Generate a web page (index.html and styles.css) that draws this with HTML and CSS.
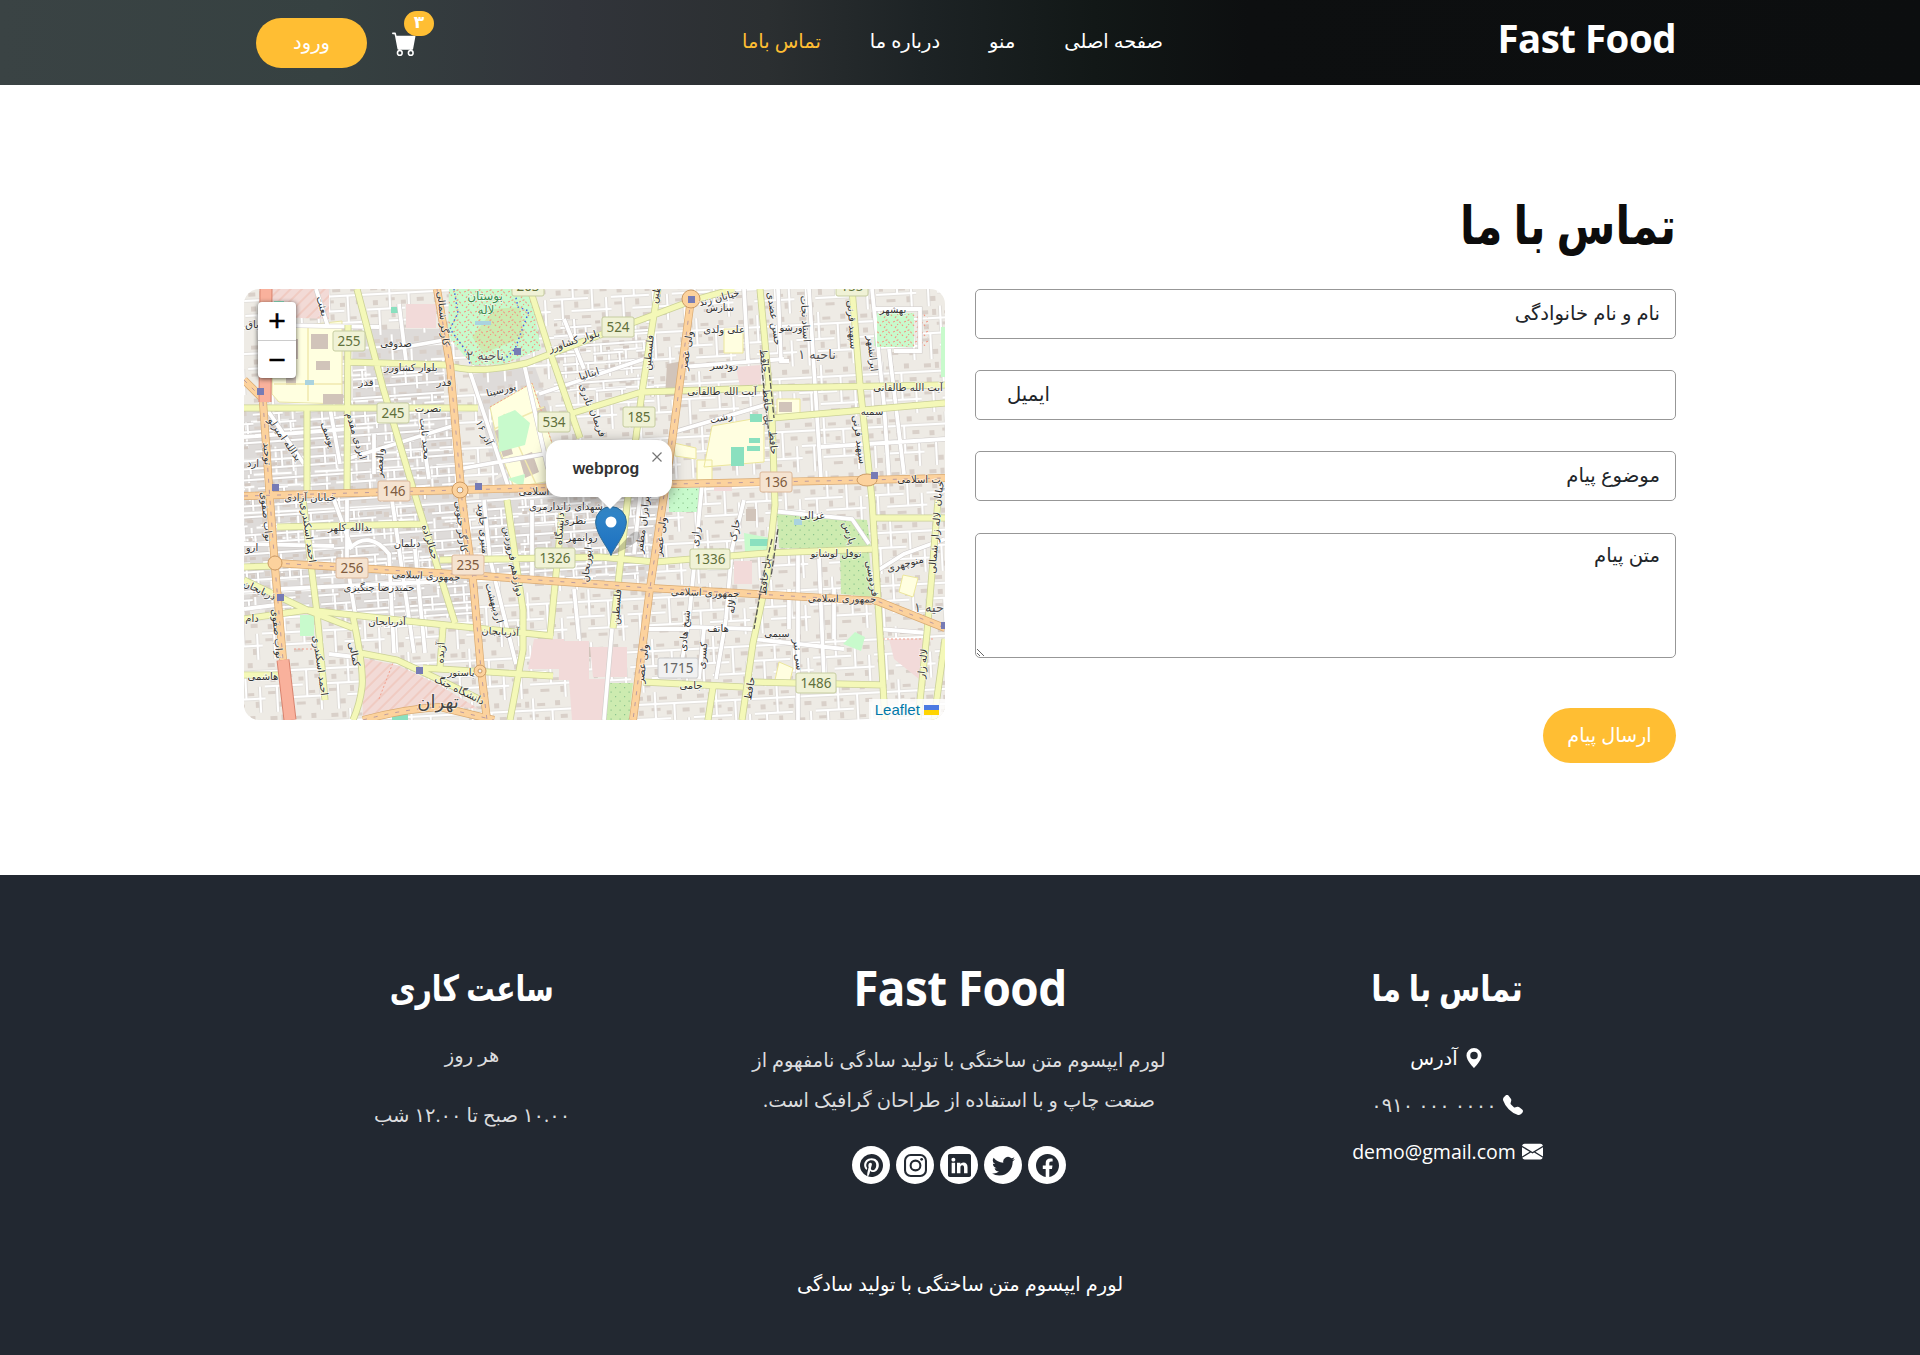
FILE: index.html
```html
<!DOCTYPE html>
<html lang="fa" dir="rtl">
<head>
<meta charset="utf-8">
<title>Fast Food</title>
<link rel="stylesheet" href="styles.css">
</head>
<body>
<header class="header">
  <div class="container header-row">
    <a class="brand">Fast Food</a>
    <nav class="nav">
      <a>صفحه اصلی</a><a>منو</a><a>درباره ما</a><a class="active">تماس باما</a>
    </nav>
    <div class="actions">
      <a class="cart">
        <svg width="25" height="25" viewBox="0 0 16 16" fill="currentColor"><path d="M0 1.5A.5.5 0 0 1 .5 1H2a.5.5 0 0 1 .485.379L2.89 3H14.5a.5.5 0 0 1 .491.592l-1.5 8A.5.5 0 0 1 13 12H4a.5.5 0 0 1-.491-.408L2.01 3.607 1.61 2H.5a.5.5 0 0 1-.5-.5zM5 12a2 2 0 1 0 0 4 2 2 0 0 0 0-4zm7 0a2 2 0 1 0 0 4 2 2 0 0 0 0-4zm-7 1a1 1 0 1 1 0 2 1 1 0 0 1 0-2zm7 0a1 1 0 1 1 0 2 1 1 0 0 1 0-2z"/></svg>
        <span class="badge">۳</span>
      </a>
      <a class="login">ورود</a>
    </div>
  </div>
</header>

<main class="container contact">
  <h1 class="title">تماس با ما</h1>
  <div class="columns">
    <form class="form">
      <input class="field" type="text" placeholder="نام و نام خانوادگی">
      <input class="field email" type="email" dir="ltr" placeholder="ایمیل">
      <input class="field" type="text" placeholder="موضوع پیام">
      <textarea class="field message" placeholder="متن پیام"></textarea>
      <button class="send" type="button">ارسال پیام</button>
    </form>
    <div class="map" dir="ltr">
      <svg class="tiles" width="701" height="431" viewBox="0 0 701 431">
        <defs>
          <pattern id="blocks" width="61" height="53" patternUnits="userSpaceOnUse" patternTransform="rotate(-3)">
            <g fill="#d9d0c9"><path d="M4 4h7v4H4zM15 3h4v6h-4zM27 5h8v3h-8zM45 3h5v5h-5zM6 18h5v5H6zM19 16h9v3h-9zM34 19h5v4h-5zM50 17h7v4h-7zM3 32h8v3H3zM24 30h4v6h-4zM41 33h9v3h-9zM13 43h6v5h-6zM31 44h9v3h-9zM51 42h5v6h-5z"/></g>
            <g stroke="#d3cfcb" stroke-width="3.4" fill="none"><path d="M0 12h61M0 27h38M21 39h40M23 0v27M42 12v27M12 27v26M56 27v26"/></g>
            <g stroke="#fff" stroke-width="2.3" fill="none"><path d="M0 12h61M0 27h38M21 39h40M23 0v27M42 12v27M12 27v26M56 27v26"/></g>
          </pattern>
          <pattern id="dense" width="43" height="37" patternUnits="userSpaceOnUse" patternTransform="rotate(-4)">
            <g stroke="#c9c5c3" stroke-width="3" fill="none"><path d="M0 6h43M0 15h30M12 24h31M0 32h43M8 6v9M26 15v17M37 24v13"/></g>
            <g stroke="#fff" stroke-width="2" fill="none"><path d="M0 6h43M0 15h30M12 24h31M0 32h43M8 6v9M26 15v17M37 24v13"/></g>
            <g fill="#d2c8c1"><path d="M13 9h4v3h-4zM30 9h6v3h-6zM4 19h5v3H4zM30 27h4v3h-4zM16 27h5v3h-5z"/></g>
          </pattern>
          <pattern id="trees" width="9" height="9" patternUnits="userSpaceOnUse"><path fill="#8cc48d" d="M2 2h1.2v1.2H2zM6.500 6.500h1.200v1.200H6.500z"/></pattern>
          <pattern id="paths" width="11" height="10" patternUnits="userSpaceOnUse"><path d="M0 3l5-2 5 6M2 9l3-4" stroke="#f5927f" stroke-width="1.100" stroke-dasharray="2 1.800" fill="none"/></pattern>
          <pattern id="hatch" width="8" height="8" patternUnits="userSpaceOnUse" patternTransform="rotate(45)"><path fill="none" stroke="#eebcae" stroke-width="1" d="M1 0v8"/></pattern>
          <path id="boulevards" d="M104 73L203 76Q230 86 283 74L356 46L447 12L490 0M0 119H234M104 36L103 203M63 119V205M113 0L139 99L174 216L211 334M286 0L306 63L336 149M329 124L398 103L523 99L701 96M414 0L398 103L383 216L369 339M516 0L528 129L531 216L523 288L509 354L498 431M528 129L701 114M608 0L616 96L628 211L634 312L641 431M694 211L683 344L674 431M628 229H701M196 271L356 268L411 273L523 264L628 260M33 238L179 235M59 211L73 324L81 411M0 291L63 321L109 339M0 330L63 321L163 332L309 347M109 328Q120 380 118 398Q116 415 109 431M116 364L153 371L196 391L241 413M179 379L309 387M263 211L279 321V361L266 431M318 224L306 347M199 338L196 378M399 393L499 398M509 393L641 396M469 398L464 431M0 278L29 277M0 386L39 386M690 431L701 350"/>
          <path id="avenues" d="M0 91L17 108M0 207L216 201L429 195L623 191L701 189M193 0L206 76L218 211L229 291L237 381L243 431M31 274L209 285L406 299L633 312L701 339M447 10L428 153L406 299L389 431M19 113L26 211L31 278L39 371M119 431Q160 420 196 418L250 431"/>
          <path id="streets" d="M30 36L135 38M150 60L206 50M72 0L84 38M225 80L265 200M155 15L163 80M280 75L304 180M320 30L340 80M295 105L400 70M0 148L103 140M103 170L215 135M215 180L300 165M86 119L96 175M130 145V185M176 130L185 190M22 119L60 175M438 78L540 70M500 0L504 73M534 0L537 72L545 72M565 0L571 96L577 190M628 0L640 115L645 190M650 62H676V20H630M430 143L524 115M577 158L701 150M645 60L660 185M0 255L90 257M90 211L108 260M103 211V270L107 300L112 330M105 260Q125 240 145 265L150 364M148 211L170 364M170 250L181 364M240 211L246 270L272 375M288 211V288M35 300L208 292M400 170L390 265M458 196L445 330L435 390M500 211L488 260L482 330L472 390M554 265V431M528 222L608 230L625 255M628 285L660 265L701 250M445 338L509 340M509 350L600 360M575 270L580 390M590 300V350M460 340L455 390M400 340H445M545 300V340M635 340L683 344M368 340L360 431M330 300L335 350M0 320L32 316M85 365L111 368"/>
        </defs>
        <rect width="701" height="431" fill="#eeebe5"/>
        <path fill="#dedbd9" d="M0 119H210L229 330L0 320zM109 40H200V119H109zM230 85L290 75L310 130L250 190zM290 170H430L410 290H235V200z"/>
        <rect width="701" height="431" fill="url(#blocks)"/>
        <path fill="url(#dense)" d="M0 119H210L229 330L0 320zM109 80H200V119H109zM310 30H410V110L310 100zM220 205H415L400 290H230z"/>
        <path fill="#ffffe0" stroke="#e9e5a4" d="M29 40L98 32V115L35 113L28 105zM246 118L288 94L320 190L270 198L255 160z"/>
        <path fill="#fffee0" stroke="#ece69b" d="M480 40h19v24h-19zM430 154l22 5v11l-21-3zM468 137l52-9v45l-60 5zM533 110h23v17h-23zM453 171h15v20h-15zM659 286l15 3-5 19-14-5zM535 373l14 6-4 17-14-5z"/>
        <g fill="#d1c4ba"><path d="M67 45h17v15H67zM40 50h14v20H40zM79 105h20v10H79zM42 84h10v12H42zM72 72h14v9H72zM275 168l13-5 7 20-14 6zM251 142l10-5 8 28-10 3zM292 120l9-3 4 12-9 3zM423 75l16-3-3 34-15 2zM283 42h12v20h-12zM535 113h13v10h-13zM502 220h10v12h-10zM344 358h6v10h-6zM134 395l8-6 3 8-8 6zM160 385l10 3-3 8-9-3zM175 400l9 2-2 8-9-3z"/></g>
        <path fill="none" stroke="#f1e9ae" stroke-width="1.500" d="M64 34V112M30 95H98M260 125L292 195M250 140L300 118"/>
        <path fill="#f2dad9" d="M162 15h30v24h-30zM492 78l25-2v24l-20 3zM290 350h30v30h-36zM315 352h30v79h-17l-3-40h-10zM346 358h37v30h-34zM341 390h20v41h-20zM490 272h18v23h-18zM645 350h35l-5 40-25-20zM470 190h18v12h-18z"/>
        <path fill="#f2dad6" d="M20 0H85V30L30 28zM117 369L153 376L195 396L235 420L196 416L119 429z"/>
        <path fill="url(#hatch)" d="M20 0H85V30L30 28zM117 369L153 376L195 396L235 420L196 416L119 429z"/>
        <path fill="#c8facc" d="M205 0H286L297 60L260 75L228 76L204 47zM254 128l17-7 15 13-5 22-26 7zM425 199h30v24h-30zM56 326h14v21H56zM500 244l26 5-3 14h-22zM630 25h39v32h-39zM599 355l12-12 10 5-4 14zM263 190l18-5-2 13zM697 38h4v50h-4z"/>
        <path fill="#cdebb0" d="M250 20L276 18L280 48L240 64L228 48zM533 225L623 231L627 260L535 259zM596 263L625 261L629 308L597 305zM363 394H389L385 431H358z"/>
        <path fill="url(#trees)" d="M533 225L623 231L627 260L535 259zM596 263L625 261L629 308L597 305zM363 394H389L385 431H358zM425 199h30v24h-30z"/>
        <path fill="url(#paths)" d="M205 0H286L297 60L260 75L228 76L204 47zM645 25h39v32h-39z"/>
        <g fill="none" stroke="#f3a08e" stroke-dasharray="2 2"><path d="M246 118L288 94L320 190M50 360h30M135 410L150 371M635 350h55"/></g>
        <path fill="none" stroke="#4764df" stroke-width="1.500" stroke-dasharray="1.500 3" d="M210 0L214 24L206 40L222 62L226 75M270 0L274 18L285 22L271 60L258 73"/>
        <path fill="#8ae0bf" d="M487 158h13v19h-13zM506 125h12v8h-12zM505 149h11v5h-11zM503 157h13v5h-13zM147 18h9v6h-9zM506 250h18v7h-18zM30 12h10v5H30zM148 424h16v7h-16z"/>
        <path fill="#aad3df" d="M61 91h9v5h-9zM231 32h16v4h-16zM550 230h8v6h-8z"/>
        <use href="#streets" fill="none" stroke="#d0ccca" stroke-width="5"/>
        <use href="#streets" fill="none" stroke="#fff" stroke-width="3.800"/>
        <path fill="#c8facc" d="M633 24h37v34h-37z"/>
        <path fill="url(#paths)" d="M633 24h37v34h-37z"/>
        <use href="#boulevards" fill="none" stroke="#cbd197" stroke-width="7"/>
        <use href="#boulevards" fill="none" stroke="#f4f8b8" stroke-width="5.400"/>
        <use href="#avenues" fill="none" stroke="#d9aa72" stroke-width="8"/>
        <use href="#avenues" fill="none" stroke="#fcd29d" stroke-width="6.600"/>
        <use href="#avenues" fill="none" stroke="#a98da1" stroke-width=".8" stroke-dasharray="4 7"/>
        <path fill="none" stroke="#d8836e" stroke-width="13" d="M22 0L21 113M39 371L46 431"/>
        <path fill="none" stroke="#f9b19c" stroke-width="11" d="M22 0L21 113M39 371L46 431"/>
        <path fill="none" stroke="#555" stroke-width="1.300" stroke-dasharray="6 2" d="M517 70L523 129L527 160M524 70L530 129M528 250L519 288L510 340M534 240L527 288"/>
        <g fill="#fcd29d" stroke="#cc9a63"><circle cx="216" cy="201" r="8"/><circle cx="31" cy="274" r="7"/><circle cx="447" cy="10" r="9"/><circle cx="236" cy="382" r="6"/><ellipse cx="623" cy="191" rx="10" ry="6"/></g>
        <g fill="#eee" stroke="#cc9a63"><circle cx="216" cy="201" r="3"/><circle cx="236" cy="382" r="2"/></g>
        <g fill="#767bb5"><path d="M13 99h7v7h-7zM28 195h7v7h-7zM231 194h7v7h-7zM270 59h7v7h-7zM444 7h7v7h-7zM627 183h7v7h-7zM33 305h7v7h-7zM172 378h7v7h-7zM697 333h4v7h-4z"/></g>

        <g class="label">
          <text x="152" y="58">صدوقی</text><text x="167" y="82">بلوار کشاورز</text><text x="122" y="97">قدر</text><text x="200" y="97">قدر</text><text x="184" y="123">نصرت</text>
          <text x="66" y="212">خیابان آزادی</text><text x="290" y="206">اسلامی</text><text x="8" y="39">باق</text><text x="9" y="178">ارد</text>
          <text transform="translate(75 18) rotate(75)">بعثت</text>
          <text transform="translate(196 30) rotate(84)">کارگر شمالی</text>
          <text transform="translate(258 104) rotate(-14)">پورسینا</text>
          <text transform="translate(331 55) rotate(-18)">بلوار کشاورز</text>
          <text transform="translate(346 88) rotate(-18)">ایتالیا</text>
          <text transform="translate(339 107) rotate(72)">نادری</text>
          <text transform="translate(351 135) rotate(70)">فریمان</text>
          <text transform="translate(237 145) rotate(65)">۱۶ آذر</text>
          <text transform="translate(38 152) rotate(55)">یدالله امیرلو</text>
          <text transform="translate(81 147) rotate(70)">یوسف</text>
          <text transform="translate(109 148) rotate(73)">ایزدی مقدم</text>
          <text transform="translate(139 174) rotate(-87)">والعصر</text>
          <text transform="translate(178 150) rotate(84)">مجید ثابت</text>
          <text transform="translate(20 165) rotate(86)">توحید</text>
          <text x="476" y="22">سازش</text><text x="480" y="44">علی ولدی</text><text x="547" y="42">ورشو</text><text x="480" y="80">رودسر</text><text x="478" y="106">آیت الله طالقانی</text><text x="664" y="102">آیت الله طالقانی</text>
          <text x="649" y="24">بهشهر</text><text x="628" y="126">سمیه</text><text x="675" y="194">ت اسلامی</text>
          <text transform="translate(478 132) rotate(-12)">رشت</text><text transform="translate(476 12) rotate(-15)">خیابان زند</text>
          <text transform="translate(408 64) rotate(-84)">فلسطین</text><text transform="translate(415 6) rotate(-75)">طین</text><text transform="translate(446 62) rotate(-81)">ولی عصر</text>
          <text transform="translate(527 30) rotate(82)">حسن عضدی</text><text transform="translate(558 30) rotate(86)">استاد نجات</text><text transform="translate(605 36) rotate(86)">سپهبد قرنی</text><text transform="translate(625 65) rotate(84)">ایرانشهر</text>
          <text transform="translate(517 72) rotate(84)">حافظ</text><text transform="translate(520 118) rotate(86)">پل حافظ</text><text transform="translate(526 154) rotate(86)">حافظ</text><text transform="translate(612 151) rotate(82)">سپهبد قرنی</text>
          <text x="106" y="242">یدالله کلهر</text><text x="163" y="258">دیلمان</text><text transform="translate(182 290) rotate(3)">جمهوری اسلامی</text><text x="135" y="302">حمیدرضا چنگیزی</text><text x="143" y="336">آذربایجان</text><text transform="translate(256 346) rotate(3)">آذربایجان</text><text transform="translate(14 304) rotate(25)">ذربایجان</text>
          <text x="217" y="387">پاستور</text><text x="19" y="391">هاشمی</text><text x="8" y="333">دام</text><text x="8" y="262">ارو</text><text transform="translate(214 404) rotate(26)">دانشگاه جنگ</text>
          <text x="322" y="221">شهدای ژاندارمری</text><text x="330" y="235">نظری</text><text x="338" y="252">روانمهر</text>
          <text transform="translate(61 244) rotate(82)">احمد اسکندری</text><text transform="translate(73 377) rotate(82)">احمد اسکندری</text><text transform="translate(19 228) rotate(84)">نواب صفوی</text><text transform="translate(30 345) rotate(85)">نواب صفوی</text><text transform="translate(183 254) rotate(73)">جمالزاده</text><text transform="translate(214 238) rotate(84)">کارگر جنوبی</text><text transform="translate(236 240) rotate(85)">منیری جاوید</text><text transform="translate(266 273) rotate(79)">دوازدهم فروردین</text><text transform="translate(247 315) rotate(74)">اردیبهشت</text><text transform="translate(107 366) rotate(78)">کمالی</text><text transform="translate(200 364) rotate(-86)">آژیده</text><text transform="translate(319 240) rotate(-86)">دانشگاه</text><text transform="translate(346 276) rotate(-84)">ابوریحان</text>
          <text transform="translate(402 236) rotate(-83)">برادران مظفر</text><text transform="translate(420 248) rotate(-83)">ولی عصر</text><text transform="translate(455 248) rotate(-85)">رازی</text><text transform="translate(494 242) rotate(-80)">خارک</text>
          <text x="568" y="230">غزالی</text><text x="592" y="268">نوفل لوشاتو</text><text transform="translate(662 278) rotate(-15)">منوچهری</text><text transform="translate(461 307) rotate(2)">جمهوری اسلامی</text><text transform="translate(598 313) rotate(1)">جمهوری اسلامی</text><text x="474" y="343">هاتف</text><text x="533" y="348">سیمی</text><text x="447" y="400">جامی</text>
          <text transform="translate(376 318) rotate(-86)">فلسطین</text><text transform="translate(444 342) rotate(-84)">شیخ هادی</text><text transform="translate(462 367) rotate(-84)">کسری</text><text transform="translate(491 318) rotate(-82)">لاله</text><text transform="translate(402 375) rotate(-83)">ولی عصر</text><text transform="translate(524 288) rotate(-84)">پل حافظ</text><text transform="translate(509 400) rotate(-80)">حافظ</text><text transform="translate(551 366) rotate(84)">سی تیر</text><text transform="translate(602 245) rotate(72)">پارس</text><text transform="translate(625 290) rotate(80)">فردوسی</text><text transform="translate(694 254) rotate(-85)">لاله زار شمالی</text><text transform="translate(682 375) rotate(-83)">لاله زار</text><text transform="translate(698 205) rotate(-80)">خیابان</text>
        </g>
        <g class="label area"><text x="241" y="71">ناحیه ۲</text><text x="573" y="70">ناحیه ۱</text><text x="685" y="323">حیه ۱</text><text class="park" x="241" y="11">بوستان</text><text class="park" x="242" y="25">لاله</text><text class="city" x="194" y="419">تهران</text></g>

        <g class="shields">
          <g transform="translate(105 52)"><rect x="-16" y="-10" width="32" height="20" rx="2"/><text y="4.500">255</text></g>
          <g transform="translate(149 124)"><rect x="-16" y="-10" width="32" height="20" rx="2"/><text y="4.500">245</text></g>
          <g transform="translate(310 133)"><rect x="-16" y="-10" width="32" height="20" rx="2"/><text y="4.500">534</text></g>
          <g transform="translate(374 38)"><rect x="-16" y="-10" width="32" height="20" rx="2"/><text y="4.500">524</text></g>
          <g transform="translate(395 128)"><rect x="-16" y="-10" width="32" height="20" rx="2"/><text y="4.500">185</text></g>
          <g transform="translate(284 -3)"><rect x="-16" y="-10" width="32" height="20" rx="2"/><text y="4.500">203</text></g>
          <g transform="translate(608 -3)"><rect x="-16" y="-10" width="32" height="20" rx="2"/><text y="4.500">155</text></g>
          <g transform="translate(311 269)"><rect x="-20" y="-10" width="40" height="20" rx="2"/><text y="4.500">1326</text></g>
          <g transform="translate(466 270)"><rect x="-20" y="-10" width="40" height="20" rx="2"/><text y="4.500">1336</text></g>
          <g transform="translate(572 394)"><rect x="-20" y="-10" width="40" height="20" rx="2"/><text y="4.500">1486</text></g>
          <g class="minor" transform="translate(434 379)"><rect x="-20" y="-10" width="40" height="20" rx="2"/><text y="4.500">1715</text></g>
          <g class="primary" transform="translate(150 202)"><rect x="-16" y="-10" width="32" height="20" rx="2"/><text y="4.500">146</text></g>
          <g class="primary" transform="translate(532 193)"><rect x="-16" y="-10" width="32" height="20" rx="2"/><text y="4.500">136</text></g>
          <g class="primary" transform="translate(108 279)"><rect x="-16" y="-10" width="32" height="20" rx="2"/><text y="4.500">256</text></g>
          <g class="primary" transform="translate(224 276)"><rect x="-16" y="-10" width="32" height="20" rx="2"/><text y="4.500">235</text></g>
        </g>
      </svg>
      <div class="zoom-control"><span>+</span><span>−</span></div>
      <svg class="marker" width="60" height="52" viewBox="0 0 60 52">
        <defs><linearGradient id="pin" x1="0" y1="0" x2="0" y2="1"><stop offset="0" stop-color="#3388c8"/><stop offset="1" stop-color="#1b6fc0"/></linearGradient></defs>
        <path d="M16 49L36 28Q45 22 45 31Q40 40 16 49z" fill="#000" opacity=".2"/>
        <path d="M16 49.500C14 43 .6 28 .6 16A15.400 15.400 0 0 1 31.400 16C31.400 28 18 43 16 49.500z" fill="url(#pin)" stroke="#2e6c97"/>
        <circle cx="16" cy="16" r="5.500" fill="#fff"/>
      </svg>
      <div class="popup">webprog
        <svg class="close" width="10" height="10" viewBox="0 0 10 10"><path d="M.5.5l9 9m0-9l-9 9" stroke="#757575" stroke-width="1.200"/></svg>
      </div>
      <div class="attribution">Leaflet <svg width="15" height="10" viewBox="0 0 15 10"><path fill="#4c7be1" d="M0 0h15v5H0z"/><path fill="#ffd500" d="M0 5h15v5H0z"/></svg></div>
    </div>
  </div>
</main>

<footer class="footer">
  <div class="container footer-grid">
    <section class="footer-col contacts">
      <h2>تماس با ما</h2>
      <p class="address"><svg width="20" height="20" viewBox="0 0 16 16" fill="currentColor"><path d="M8 16s6-5.686 6-10A6 6 0 0 0 2 6c0 4.314 6 10 6 10zm0-7a3 3 0 1 1 0-6 3 3 0 0 1 0 6z"/></svg><span>آدرس</span></p>
      <p class="phone"><svg width="20" height="20" viewBox="0 0 16 16" fill="#fff"><path d="M1.885.511a1.745 1.745 0 0 1 2.610.163L6.290 2.980c.329.423.445.974.315 1.494l-.547 2.190a.678.678 0 0 0 .178.643l2.457 2.457a.678.678 0 0 0 .644.178l2.189-.547a1.745 1.745 0 0 1 1.494.315l2.306 1.794c.829.645.905 1.870.163 2.611l-1.034 1.034c-.74.74-1.846 1.065-2.877.702a18.634 18.634 0 0 1-7.010-4.420 18.634 18.634 0 0 1-4.420-7.009c-.362-1.030-.037-2.137.703-2.877L1.885.511z"/></svg><span dir="ltr">۰۹۱۰ ۰۰۰ ۰۰۰۰</span></p>
      <p class="mail"><svg width="21" height="21" viewBox="0 0 16 16" fill="currentColor"><path d="M.05 3.555A2 2 0 0 1 2 2h12a2 2 0 0 1 1.950 1.555L8 8.414.050 3.555ZM0 4.697v7.104l5.803-3.558L0 4.697ZM6.761 8.830l-6.570 4.027A2 2 0 0 0 2 14h12a2 2 0 0 0 1.808-1.144l-6.570-4.027L8 9.586l-1.239-.757Zm3.436-.586L16 11.801V4.697l-5.803 3.546Z"/></svg><span>demo@gmail.com</span></p>
    </section>
    <section class="footer-col about">
      <h2 class="footer-brand">Fast Food</h2>
      <p class="lorem">لورم ایپسوم متن ساختگی با تولید سادگی نامفهوم از<br>صنعت چاپ و با استفاده از طراحان گرافیک است.</p>
      <div class="social">
        <a><svg viewBox="0 0 16 16"><path d="M16 8.049c0-4.446-3.582-8.050-8-8.050C3.580 0-.002 3.603-.002 8.050c0 4.017 2.926 7.347 6.750 7.951v-5.625h-2.030V8.050H6.750V6.275c0-2.017 1.195-3.131 3.022-3.131.876 0 1.791.157 1.791.157v1.980h-1.009c-.993 0-1.303.621-1.303 1.258v1.510h2.218l-.354 2.326H9.250V16c3.824-.604 6.750-3.934 6.750-7.951z"/></svg></a>
        <a><svg viewBox="0 0 16 16"><path d="M5.026 15c6.038 0 9.341-5.003 9.341-9.334 0-.14 0-.282-.006-.422A6.685 6.685 0 0 0 16 3.542a6.658 6.658 0 0 1-1.889.518 3.301 3.301 0 0 0 1.447-1.817 6.533 6.533 0 0 1-2.087.793A3.286 3.286 0 0 0 7.875 6.030a9.325 9.325 0 0 1-6.767-3.429 3.289 3.289 0 0 0 1.018 4.382A3.323 3.323 0 0 1 .64 6.575v.045a3.288 3.288 0 0 0 2.632 3.218 3.203 3.203 0 0 1-.865.115 3.230 3.230 0 0 1-.614-.057 3.283 3.283 0 0 0 3.067 2.277A6.588 6.588 0 0 1 .78 13.580a6.320 6.320 0 0 1-.78-.045A9.344 9.344 0 0 0 5.026 15z"/></svg></a>
        <a><svg viewBox="0 0 16 16"><path d="M0 1.146C0 .513.526 0 1.175 0h13.650C15.474 0 16 .513 16 1.146v13.708c0 .633-.526 1.146-1.175 1.146H1.175C.526 16 0 15.487 0 14.854V1.146zm4.943 12.248V6.169H2.542v7.225h2.401zm-1.200-8.212c.837 0 1.358-.554 1.358-1.248-.015-.709-.52-1.248-1.342-1.248-.822 0-1.359.54-1.359 1.248 0 .694.521 1.248 1.327 1.248h.016zm4.908 8.212V9.359c0-.216.016-.432.08-.586.173-.431.568-.878 1.232-.878.869 0 1.216.662 1.216 1.634v3.865h2.401V9.250c0-2.220-1.184-3.252-2.764-3.252-1.274 0-1.845.7-2.165 1.193v.025h-.016a5.540 5.540 0 0 1 .016-.025V6.169h-2.400c.03.678 0 7.225 0 7.225h2.400z"/></svg></a>
        <a><svg viewBox="0 0 16 16"><rect x=".72" y=".72" width="14.560" height="14.560" rx="4" fill="none" stroke="#222831" stroke-width="1.440"/><circle cx="8" cy="8" r="3.400" fill="none" stroke="#222831" stroke-width="1.440"/><circle cx="12.270" cy="3.730" r=".96"/></svg></a>
        <a><svg viewBox="0 0 16 16"><path d="M8 0a8 8 0 0 0-2.915 15.452c-.07-.633-.134-1.606.027-2.297.146-.625.938-3.977.938-3.977s-.239-.479-.239-1.187c0-1.113.645-1.943 1.448-1.943.682 0 1.012.512 1.012 1.127 0 .686-.437 1.712-.663 2.663-.188.796.4 1.446 1.185 1.446 1.422 0 2.515-1.500 2.515-3.664 0-1.915-1.377-3.254-3.342-3.254-2.276 0-3.612 1.707-3.612 3.471 0 .688.265 1.425.595 1.826a.24.24 0 0 1 .056.23c-.061.252-.196.796-.222.907-.035.146-.116.177-.268.107-1-.465-1.624-1.926-1.624-3.100 0-2.523 1.834-4.840 5.286-4.840 2.775 0 4.932 1.977 4.932 4.620 0 2.757-1.739 4.976-4.151 4.976-.811 0-1.573-.421-1.834-.919l-.498 1.902c-.181.695-.669 1.566-.995 2.097A8 8 0 1 0 8 0z"/></svg></a>
      </div>
    </section>
    <section class="footer-col hours">
      <h2>ساعت کاری</h2>
      <p class="days">هر روز</p>
      <p class="time">۱۰.۰۰ صبح تا ۱۲.۰۰ شب</p>
    </section>
  </div>
  <p class="copyright">لورم ایپسوم متن ساختگی با تولید سادگی</p>
</footer>
</body>
</html>
```
FILE: styles.css
```css
* { box-sizing: border-box; }
body {
  margin: 0;
  background: #fff;
  color: #0c0c0c;
  font-family: "Open Sans", "DejaVu Sans", sans-serif;
  font-size: 19.5px;
}
h1, h2, p { margin: 0; }
.container { width: 1432px; margin: 0 auto; }

.header {
  height: 85px;
  background: linear-gradient(90deg, #3a4344 0%, #364141 17%, #31343a 30%, #2b2f31 40%, #1d2325 48%, #121817 57%, #0d0f10 65%, #0c0e0f 100%);
  color: #fff;
}
.header-row { display: grid; grid-template-columns: 1fr auto 1fr; height: 85px; }
.brand { font-size: 40px; font-weight: 700; line-height: 76px; height: 76px; direction: ltr; text-align: right; letter-spacing: -0.5px; transform: scaleX(.96); transform-origin: right; }
.nav { display: flex; gap: 49px; margin-right: 15px; line-height: 82px; font-size: 19.4px; white-space: nowrap; }
.nav .active { color: #ffbe33; }
.actions { display: flex; justify-content: flex-end; align-items: flex-start; gap: 25px; padding: 18px 0 0 12px; }
.cart { position: relative; display: flex; padding-top: 13px; height: 50px; }
.badge {
  position: absolute; left: 12px; top: -7px; width: 30px; height: 25px;
  border-radius: 13px; background: #ffbe33; font-size: 17px; font-weight: 700; line-height: 22px; text-align: center;
}
.login { width: 111px; height: 50px; border-radius: 25px; background: #ffbe33; line-height: 47px; text-align: center; font-size: 19.5px; }

.contact { height: 790px; padding-top: 107px; }
.title { height: 97px; font-size: 52px; line-height: 64px; font-weight: 700; transform: scaleX(.82); transform-origin: right; }
.columns { display: grid; grid-template-columns: 701px 701px; gap: 30px; }
.form { display: flex; flex-direction: column; align-items: flex-start; }
.field {
  width: 100%; height: 50px; margin: 0 0 31px; padding: 0 15px 3px;
  border: 1px solid #979797; border-radius: 5px; background: #fff; font: inherit; font-size: 19.6px;
}
.field::placeholder { color: #212529; opacity: 1; }
.email { padding-left: 31px; }
.message { height: 125px; margin: 1px 0 50px; padding: 7px 15px; resize: vertical; }
.send { width: 133px; height: 55px; border: 0; border-radius: 28px; background: #ffbe33; color: #fff; font: inherit; font-size: 19.2px; padding: 0 0 3px; }

.map { position: relative; width: 701px; height: 431px; border-radius: 15px; overflow: hidden; }
.tiles { display: block; }
.label { font: 10px "DejaVu Sans", sans-serif; fill: #333; stroke: #fff; stroke-opacity: .65; stroke-width: 1.5px; paint-order: stroke; text-anchor: middle; }
.area { font-size: 13px; fill: #555; }
.park { font-size: 12px; fill: #3b8c50; }
.city { font-size: 18px; fill: #444; }
.shields { font: 13.5px "Noto Sans", sans-serif; text-anchor: middle; fill: #60703b; }
.shields rect { fill: #f0f2d6; stroke: #c6cda0; }
.shields .primary { fill: #805c40; }
.shields .primary rect { fill: #f5e3d0; stroke: #dcb89a; }
.shields .minor { fill: #666; }
.shields .minor rect { fill: #f1f1f1; stroke: #ccc; }
.zoom-control {
  position: absolute; left: 14px; top: 13px; width: 38px; display: flex; flex-direction: column;
  background: #fff; border-radius: 4px; box-shadow: 0 1px 5px rgba(0,0,0,.65);
}
.zoom-control span { height: 38px; font: 400 30px/38px "Liberation Sans", sans-serif; -webkit-text-stroke: .5px #000; text-align: center; color: #000; }
.zoom-control span + span { border-top: 1px solid #ccc; }
.marker { position: absolute; left: 351px; top: 217px; }
.popup {
  position: absolute; left: 302px; top: 151px; width: 126px; height: 57px; border-radius: 15px;
  background: #fff; box-shadow: 0 3px 14px rgba(0,0,0,.4);
  font: 700 16px/57px "Liberation Sans", sans-serif; color: #333; text-align: center; padding-right: 6px;
}
.popup::after { content: ""; position: absolute; left: 51px; top: 56px; border: 13px solid transparent; border-top-color: #fff; border-bottom: 0; }
.close { position: absolute; right: 10px; top: 12px; }
.attribution {
  position: absolute; right: 0; bottom: 0; height: 21px; padding: 0 6px; background: rgba(255,255,255,.8);
  font: 15px/21px "Liberation Sans", sans-serif; color: #0078a8;
}

.footer { height: 480px; padding-top: 87px; background: #222831; color: #fff; text-align: center; }
.footer-grid { display: grid; grid-template-columns: repeat(3, 1fr); gap: 30px; height: 306px; }
.footer-col { width: 458px; }
.footer-col h2 { height: 52px; font-size: 36px; line-height: 51px; transform: scaleX(.83); }
.footer-col .footer-brand { font-size: 48px; line-height: 52px; letter-spacing: -0.6px; transform: scaleX(.956); padding-left: 2px; }
.footer-col.hours h2 { transform: scaleX(.785); padding-left: 2px; }
.footer-col p { display: flex; justify-content: center; align-items: center; gap: 6px; }
.address { margin-top: 20px; height: 47px; line-height: 44px; }
.phone, .mail { height: 47px; line-height: 45px; }
.phone, .lorem, .days, .time { color: #dcdddf; }
.mail { padding-left: 1px; }
.footer-col .lorem { display: block; margin-top: 26px; line-height: 40px; font-size: 19.4px; white-space: nowrap; }
.social { display: flex; justify-content: center; gap: 6px; margin-top: 26px; }
.social a { width: 38px; height: 38px; border-radius: 50%; background: #fff; display: flex; align-items: center; justify-content: center; }
.social svg { width: 23px; height: 23px; fill: #222831; }
.days { margin-top: 10px; height: 60px; }
.time { height: 60px; }
.days, .time { padding-left: 2px; }
.copyright { line-height: 32px; font-size: 19.4px; }
```
